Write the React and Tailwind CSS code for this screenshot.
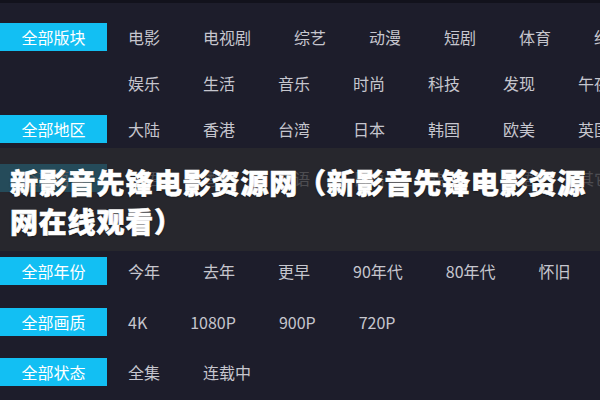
import React from 'react';

const rows = [
  {
    label: '全部版块',
    mt: 'mt-[11px]',
    lines: [
      ['电影', '电视剧', '综艺', '动漫', '短剧', '体育', '纪录片'],
      ['娱乐', '生活', '音乐', '时尚', '科技', '发现', '午夜'],
    ],
  },
  {
    label: '全部地区',
    mt: 'mt-0',
    lines: [['大陆', '香港', '台湾', '日本', '韩国', '欧美', '英国']],
  },
  {
    label: '全部语言',
    mt: 'mt-[3px]',
    lines: [['国语', '粤语', '英语', '日语', '韩语', '法语', '其它'], []],
  },
  {
    label: '全部年份',
    mt: 'mt-px',
    lines: [['今年', '去年', '更早', '90年代', '80年代', '怀旧']],
  },
  {
    label: '全部画质',
    mt: 'mt-[5px]',
    lines: [['4K', '1080P', '900P', '720P']],
  },
  {
    label: '全部状态',
    mt: 'mt-[4px]',
    lines: [['全集', '连载中']],
  },
];

const FilterRow = ({ row }) => (
  <div className={row.mt}>
    {row.lines.map((items, i) => (
      <div key={i} className="flex items-center h-[46px] whitespace-nowrap">
        {i === 0 ? (
          <div className="w-[107px] h-[28px] shrink-0 bg-[#12bff3] text-white text-[16px] flex items-center justify-center">
            {row.label}
          </div>
        ) : (
          <div className="w-[107px] shrink-0" />
        )}
        <div className="flex items-center pl-[21px]">
          {items.map((t) => (
            <span key={t} className="mr-[43px] text-[16px] text-[#c6c6ce] shrink-0">
              {t}
            </span>
          ))}
        </div>
      </div>
    ))}
  </div>
);

export default function App() {
  return (
    <div
      className="relative w-[600px] h-[400px] overflow-hidden bg-[#1d1d2b] border-t-[3px] border-[#12121c]"
      style={{ fontFamily: '"Noto Sans CJK SC", "Noto Sans", sans-serif' }}
    >
      {rows.map((r) => (
        <FilterRow key={r.label} row={r} />
      ))}

      {/* title strip over the filters */}
      <div className="absolute left-0 right-0 top-[145px] h-[103px] bg-[rgba(42,42,46,0.78)] pl-[10px] pt-[15px]">
        <h1 className="text-white font-black text-[28px] leading-[39px] tracking-[0.8px] [-webkit-text-stroke:0.6px_white] [text-shadow:0_1px_2px_rgba(0,0,0,0.5)]">
          <span className="block whitespace-nowrap">新影音先锋电影资源网（新影音先锋电影资源</span>
          <span className="block whitespace-nowrap">网在线观看）</span>
        </h1>
      </div>
    </div>
  );
}
